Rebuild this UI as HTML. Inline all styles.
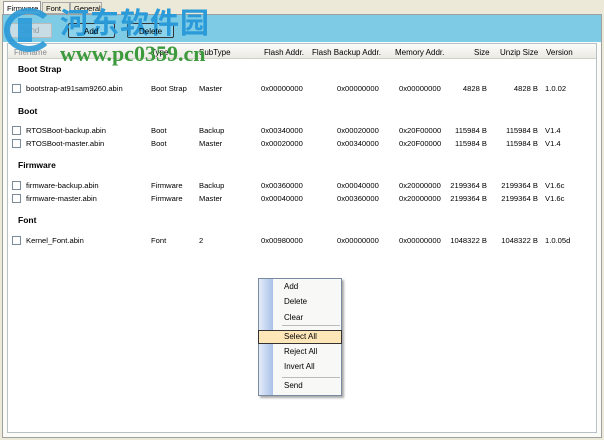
<!DOCTYPE html><html><head><style>
*{margin:0;padding:0;box-sizing:border-box}
body{width:604px;height:440px;background:#ece9d8;font-family:"Liberation Sans","Noto Sans CJK SC",sans-serif;font-size:8px;color:#000;position:relative;overflow:hidden}
.a{position:absolute;white-space:nowrap}
.r{text-align:right}
.cb{position:absolute;width:9px;height:9px;border:1px solid #7a8a99;background:#fff}
.b{font-weight:bold;font-size:8.5px}
#rows .a{font-size:7.6px}
</style></head><body>
<div class="a" style="left:0;top:0;width:604px;height:14px;background:#ece9d8"></div>
<div class="a" style="left:3px;top:1px;width:38px;height:14px;background:#fff;border:1px solid #999;border-bottom:none;padding:2px 3px;font-size:7.5px">Firmware</div>
<div class="a" style="left:42px;top:2px;width:28px;height:12px;border:1px solid #aaa;padding:1px 3px;font-size:7.5px">Font</div>
<div class="a" style="left:70px;top:2px;width:32px;height:12px;border:1px solid #aaa;padding:1px 3px;font-size:7.5px">General</div>
<div class="a" style="left:2px;top:14px;width:600px;height:424px;border:1px solid #a0a0a0;background:#fbfbf8"></div>
<div class="a" style="left:3px;top:15px;width:598px;height:27px;background:#7ecbe6"></div>
<div class="a" style="left:8px;top:23px;width:44px;height:15px;border:1px solid #bbb;border-radius:2px;text-align:center;line-height:13px;color:#999;background:#c8dce6">Send</div>
<div class="a" style="left:68px;top:23px;width:47px;height:15px;border:1px solid #333;border-radius:2px;background:#8cd2ea"></div>
<div class="a" style="left:127px;top:23px;width:47px;height:15px;border:1px solid #333;border-radius:2px;background:#8cd2ea"></div>
<div class="a" style="left:7px;top:43px;width:590px;height:390px;background:#fff;border:1px solid #b8c0c8"></div>
<div class="a" style="left:8px;top:44px;width:588px;height:15px;background:linear-gradient(#fbfbf9,#ebeae4);border-bottom:1px solid #d0d0c8"></div>
<div class="a" style="left:14px;top:48px;color:#888">Filename</div>
<div class="a" style="left:151px;top:48px">Type</div>
<div class="a" style="left:199px;top:48px">SubType</div>
<div class="a" style="left:264px;top:48px">Flash Addr.</div>
<div class="a" style="left:312px;top:48px">Flash Backup Addr.</div>
<div class="a" style="left:395px;top:48px">Memory Addr.</div>
<div class="a" style="left:474px;top:48px">Size</div>
<div class="a" style="left:500px;top:48px">Unzip Size</div>
<div class="a" style="left:546px;top:48px">Version</div>
<div class="a b" style="left:18px;top:64px">Boot Strap</div>
<div class="a b" style="left:18px;top:106px">Boot</div>
<div class="a b" style="left:18px;top:160px">Firmware</div>
<div class="a b" style="left:18px;top:215px">Font</div>
<div id="rows"></div>
<!-- watermark -->
<div class="a" style="left:4px;top:8px;width:50px;height:44px;border-radius:50%;border:6px solid #2a9ad8;border-right-color:transparent;opacity:.9"></div>
<div class="a" style="left:18px;top:18px;width:14px;height:24px;background:#2a9ad8;opacity:.9"></div>
<div class="a" style="left:60px;top:5px;font-size:29px;font-weight:bold;color:#2a9ad8;letter-spacing:1px;font-family:'Noto Sans CJK SC',sans-serif;line-height:32px">河东软件园</div>
<div class="a" style="left:84px;top:27px;font-size:8px">Add</div>
<div class="a" style="left:139px;top:27px;font-size:8px">Delete</div>
<div class="a" style="left:60px;top:41px;font-size:22px;font-weight:bold;color:#3c9a3c;font-family:'Liberation Serif',serif;line-height:26px">www.pc0359.cn</div>
<div class="a" style="left:258px;top:278px;width:84px;height:118px;background:#f8f8f6;border:1px solid #7a8aa0;box-shadow:2px 2px 2px #aaa"></div>
<div class="a" style="left:259px;top:279px;width:14px;height:116px;background:linear-gradient(90deg,#e4ecf8,#a9c1e8)"></div>
<div class="a" style="left:258px;top:330px;width:84px;height:14px;background:#fde6b8;border:1px solid #333"></div>
<div class="a" style="left:282px;top:325px;width:58px;height:1px;background:#bbb"></div>
<div class="a" style="left:282px;top:377px;width:58px;height:1px;background:#bbb"></div>
<div class="a" style="left:284px;top:282px">Add</div>
<div class="a" style="left:284px;top:297px">Delete</div>
<div class="a" style="left:284px;top:313px">Clear</div>
<div class="a" style="left:284px;top:332px">Select All</div>
<div class="a" style="left:284px;top:347px">Reject All</div>
<div class="a" style="left:284px;top:362px">Invert All</div>
<div class="a" style="left:284px;top:381px">Send</div>
<script>
var d=[[84,"bootstrap-at91sam9260.abin","Boot Strap","Master","0x00000000","0x00000000","0x00000000","4828 B","4828 B","1.0.02"],
[126,"RTOSBoot-backup.abin","Boot","Backup","0x00340000","0x00020000","0x20F00000","115984 B","115984 B","V1.4"],
[139,"RTOSBoot-master.abin","Boot","Master","0x00020000","0x00340000","0x20F00000","115984 B","115984 B","V1.4"],
[181,"firmware-backup.abin","Firmware","Backup","0x00360000","0x00040000","0x20000000","2199364 B","2199364 B","V1.6c"],
[194,"firmware-master.abin","Firmware","Master","0x00040000","0x00360000","0x20000000","2199364 B","2199364 B","V1.6c"],
[236,"Kernel_Font.abin","Font","2","0x00980000","0x00000000","0x00000000","1048322 B","1048322 B","1.0.05d"]];
var h="";d.forEach(function(r){var y=r[0];
h+='<div class="cb" style="left:12px;top:'+(y)+'px"></div>';
h+='<div class="a" style="left:26px;top:'+y+'px">'+r[1]+'</div>';
h+='<div class="a" style="left:151px;top:'+y+'px">'+r[2]+'</div>';
h+='<div class="a" style="left:199px;top:'+y+'px">'+r[3]+'</div>';
h+='<div class="a" style="left:261px;top:'+y+'px">'+r[4]+'</div>';
h+='<div class="a" style="left:337px;top:'+y+'px">'+r[5]+'</div>';
h+='<div class="a" style="left:399px;top:'+y+'px">'+r[6]+'</div>';
h+='<div class="a r" style="left:420px;width:67px;top:'+y+'px">'+r[7]+'</div>';
h+='<div class="a r" style="left:480px;width:58px;top:'+y+'px">'+r[8]+'</div>';
h+='<div class="a" style="left:545px;top:'+y+'px">'+r[9]+'</div>';});
document.getElementById("rows").innerHTML=h;
</script>
</body></html>
